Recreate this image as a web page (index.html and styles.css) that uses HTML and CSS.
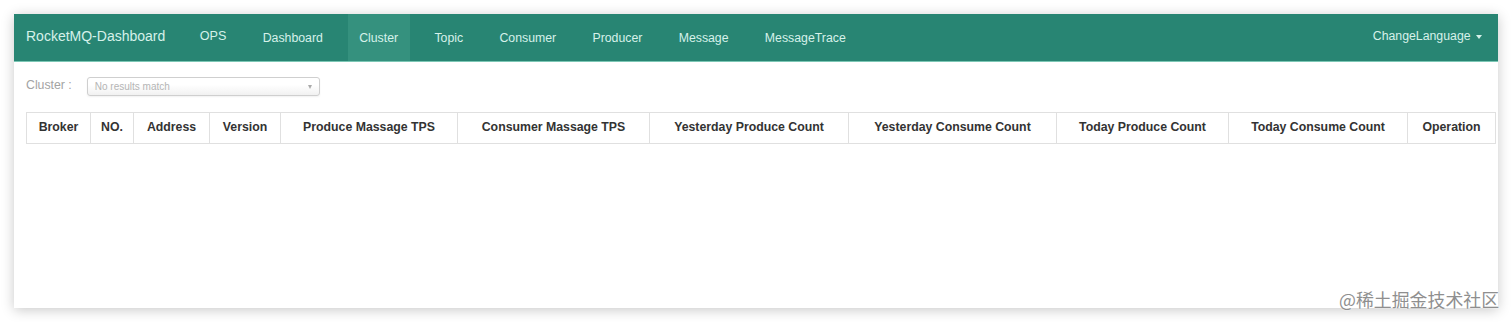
FILE: index.html
```html
<!DOCTYPE html>
<html lang="en">
<head>
<meta charset="UTF-8">
<meta name="viewport" content="width=device-width, initial-scale=1.0">
<title>RocketMQ-Dashboard</title>
<link rel="stylesheet" href="styles.css">
</head>
<body>
<div class="window">
<nav class="navbar">
  <a class="brand" href="#">RocketMQ-Dashboard</a>
  <ul class="nav">
    <li class="ops"><a href="#">OPS</a></li>
    <li><a href="#">Dashboard</a></li>
    <li class="active"><a href="#">Cluster</a></li>
    <li><a href="#">Topic</a></li>
    <li><a href="#">Consumer</a></li>
    <li><a href="#">Producer</a></li>
    <li><a href="#">Message</a></li>
    <li><a href="#">MessageTrace</a></li>
  </ul>
  <a class="lang" href="#">ChangeLanguage <span class="caret"></span></a>
</nav>
<div class="content">
  <div class="filter">
    <label class="filter-label">Cluster :</label>
    <div class="chosen">
      <span class="chosen-text">No results match</span>
      <span class="chosen-arrow"></span>
    </div>
  </div>
  <table class="cluster-table">
    <colgroup>
      <col style="width:64px">
      <col style="width:43px">
      <col style="width:76px">
      <col style="width:71px">
      <col style="width:177px">
      <col style="width:192px">
      <col style="width:199px">
      <col style="width:208px">
      <col style="width:172px">
      <col style="width:179px">
      <col style="width:88px">
    </colgroup>
    <thead>
      <tr>
        <th>Broker</th>
        <th>NO.</th>
        <th>Address</th>
        <th>Version</th>
        <th>Produce Massage TPS</th>
        <th>Consumer Massage TPS</th>
        <th>Yesterday Produce Count</th>
        <th>Yesterday Consume Count</th>
        <th>Today Produce Count</th>
        <th>Today Consume Count</th>
        <th>Operation</th>
      </tr>
    </thead>
    <tbody></tbody>
  </table>
</div>
</div>
<div class="watermark">@稀土掘金技术社区</div>
</body>
</html>
```

FILE: styles.css
```css
body {
  margin: 0;
  padding: 14px;
  background: #fff;
  font-family: 'Liberation Sans', Arial, sans-serif;
  color: #333;
}
a {
  text-decoration: none;
  color: inherit;
}
.window {
  width: 1484px;
  height: 294px;
  background: #fff;
  box-shadow: 0 2px 12px rgba(0, 0, 0, 0.22);
  overflow: hidden;
}

/* top bar */
.navbar {
  display: flex;
  height: 47px;
  padding: 0 16px 0 12px;
  background-color: #288573;
  border-bottom: 1px solid #7cc7b5;
  color: #d6f1ea;
}
.brand {
  font-size: 14px;
  line-height: 44px;
}
.nav {
  display: flex;
  gap: 13.3px;
  list-style: none;
  margin: 0 0 0 23px;
  padding: 0;
  flex: 1;
}
.nav li a {
  display: block;
  height: 45px;
  padding: 2px 11.5px 0;
  font-size: 12.3px;
  line-height: 45px;
}
.nav li.ops a {
  padding-top: 0;
  line-height: 44px;
  font-size: 12.6px;
}
.nav li.active a {
  background-color: #35917e;
}
.lang {
  font-size: 12.3px;
  line-height: 44px;
}
.caret {
  display: inline-block;
  width: 0;
  height: 0;
  margin-left: 2px;
  vertical-align: middle;
  border-top: 4px solid #d6f1ea;
  border-left: 3px solid transparent;
  border-right: 3px solid transparent;
}

/* body */
.content {
  padding: 15px 3px 0 12px;
}
.filter {
  display: flex;
  align-items: center;
  gap: 15px;
}
.filter-label {
  font-size: 12.3px;
  color: #a3a3a3;
  padding-bottom: 4px;
}
.chosen {
  position: relative;
  box-sizing: border-box;
  width: 233px;
  height: 19px;
  border: 1px solid #cfcfcf;
  border-radius: 3px;
  background: linear-gradient(#fff 40%, #f1f1f1);
  box-shadow: 0 1px 2px rgba(0, 0, 0, 0.06);
}
.chosen-text {
  display: block;
  padding-left: 7px;
  font-size: 10px;
  line-height: 18px;
  color: #b5b5b5;
}
.chosen-arrow {
  position: absolute;
  right: 7px;
  top: 7px;
  border-top: 4px solid #aaa;
  border-left: 2.5px solid transparent;
  border-right: 2.5px solid transparent;
}
.cluster-table {
  margin-top: 16px;
  width: 1469px;
  table-layout: fixed;
  border-collapse: collapse;
}
.cluster-table th {
  border: 1px solid #e0e0e0;
  padding: 6px 4px 8px;
  font-size: 12.3px;
  font-weight: bold;
  line-height: 16px;
  color: #333;
  text-align: center;
  white-space: nowrap;
}

.watermark {
  position: absolute;
  left: 1339px;
  top: 288px;
  font-family: 'Noto Sans CJK SC', sans-serif;
  font-size: 17.9px;
  line-height: 22px;
  color: #8f8f8f;
  text-shadow: 0 0 2px #fff;
  white-space: nowrap;
}
```
